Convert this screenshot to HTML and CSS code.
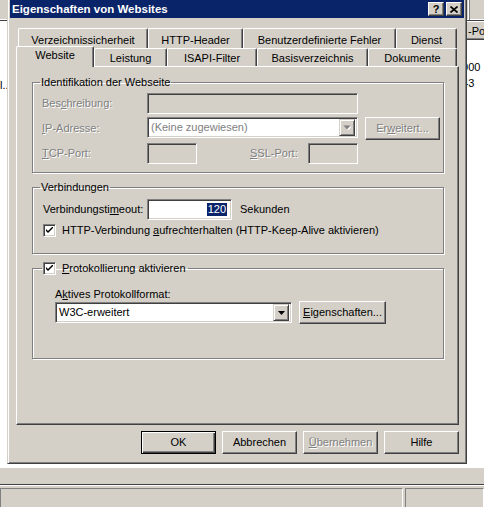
FILE: index.html
```
<!DOCTYPE html>
<html>
<head>
<meta charset="utf-8">
<link rel="stylesheet" href="styles.css">
</head>
<body>
<div class="app">
  <div class="toolbar"><span class="tsep"></span></div>
  <div class="content">
    <div class="leftpane"><span class="clip">l..</span></div>
    <div class="listpane">
      <div class="lhead"><span>-Po</span></div>
      <div class="lrows"><div class="lrow">8000</div><div class="lrow">443</div></div>
    </div>
  </div>
  <div class="hbar"></div>
  <div class="status"><div class="spanel smain"></div><div class="spanel sside"></div></div>
</div>

<div class="dialog">
  <div class="titlebar">
    <span class="ttext">Eigenschaften von Websites</span>
    <span class="tbtns">
      <span class="tbtn qm">?</span>
      <span class="tbtn"><svg width="8" height="7" viewBox="0 0 8 7"><path d="M0.5 0.5 L7.5 6.5 M7.5 0.5 L0.5 6.5" stroke="#000" stroke-width="1.6" fill="none"/></svg></span>
    </span>
  </div>
  <div class="dlgbody">
    <div class="tabs">
      <div class="tabrow back">
        <div class="tab t1">Verzeichnissicherheit</div>
        <div class="tab t2">HTTP-Header</div>
        <div class="tab t3">Benutzerdefinierte Fehler</div>
        <div class="tab t4">Dienst</div>
      </div>
      <div class="tabrow front">
        <div class="tab sel t5">Website</div>
        <div class="tab t6">Leistung</div>
        <div class="tab t7">ISAPI-Filter</div>
        <div class="tab t8">Basisverzeichnis</div>
        <div class="tab t9">Dokumente</div>
      </div>
    </div>
    <div class="panel">
      <fieldset class="grp g1">
        <legend class="lg">Identifikation der Webseite</legend>
        <div class="g1grid">
          <span class="lbl dis">Bes<u>c</u>hreibung:</span>
          <div class="edit disbg"></div>
          <span></span>
          <span class="lbl dis"><u>I</u>P-Adresse:</span>
          <div class="combo disbg"><span class="ctext dis">(Keine zugewiesen)</span><span class="cbtn"><svg width="8" height="5" viewBox="0 0 8 5"><polygon points="0.5,0.5 7.5,0.5 4,4.5" fill="#fff" transform="translate(1,1)"/><polygon points="0.5,0.5 7.5,0.5 4,4.5" fill="#808080"/></svg></span></div>
          <div class="btn dis erw">Er<u>w</u>eitert...</div>
          <span class="lbl dis"><u>T</u>CP-Port:</span>
          <div class="portrow">
            <div class="edit disbg port"></div>
            <span class="lbl dis ssl"><u>S</u>SL-Port:</span>
            <div class="edit disbg port"></div>
          </div>
        </div>
      </fieldset>

      <fieldset class="grp g2">
        <legend class="lg">Verbindungen</legend>
        <div class="torow">
          <span class="lbl tlbl">Verbindungsti<u>m</u>eout:</span>
          <div class="edit tedit"><span class="seltext">120</span></div>
          <span class="lbl sek">Sekunden</span>
        </div>
        <div class="chkrow">
          <span class="chk"><svg width="7" height="7" viewBox="0 0 7 7"><path d="M0 2 L0 4 L2 6 L7 1 L7 -1 L2 4 Z" fill="#000"/></svg></span>
          <span class="lbl">HTTP-Verbindung <u>a</u>ufrechterhalten (HTTP-Keep-Alive aktivieren)</span>
        </div>
      </fieldset>

      <fieldset class="grp g3">
        <legend class="lg lgchk">
          <span class="chk"><svg width="7" height="7" viewBox="0 0 7 7"><path d="M0 2 L0 4 L2 6 L7 1 L7 -1 L2 4 Z" fill="#000"/></svg></span>
          <span class="lbl"><u>P</u>rotokollierung aktivieren</span>
        </legend>
        <div class="fmtlbl">A<u>k</u>tives Protokollformat:</div>
        <div class="fmtrow">
          <div class="combo fmtcombo"><span class="ctext">W3C-erweitert</span><span class="cbtn"><svg width="7" height="4" viewBox="0 0 7 4"><polygon points="0,0 7,0 3.5,4" fill="#000"/></svg></span></div>
          <div class="btn eig"><u>E</u>igenschaften...</div>
        </div>
      </fieldset>
    </div>
    <div class="btnrow">
      <div class="btn def">OK</div>
      <div class="btn">Abbrechen</div>
      <div class="btn dis"><u>Ü</u>bernehmen</div>
      <div class="btn">Hilfe</div>
    </div>
  </div>
</div>
</body>
</html>
```
FILE: styles.css
```
* { box-sizing: border-box; }
html, body { margin: 0; padding: 0; }
body {
  width: 484px; height: 507px; overflow: hidden; position: relative;
  font-family: "Liberation Sans", Arial, sans-serif; font-size: 11px; line-height: 13px;
  color: #000; background: #fff;
}
u { text-decoration: underline; text-underline-offset: 1px; }

/* background application */
.app { display: flex; flex-direction: column; height: 507px; }
.toolbar { height: 21px; background: #d4d0c8; border-bottom: 1px solid #404040; box-shadow: inset 0 -1px #fff; display: flex; }
.tsep { width: 2px; margin-left: 468px; border-left: 1px solid #fff; border-right: 1px solid #808080; height: 20px; }
.content { flex: 1; display: grid; grid-template-columns: 468px 1fr; background: #fff; }
.leftpane { padding-top: 58px; }
.clip { display: block; white-space: nowrap; }
.listpane { display: flex; flex-direction: column; margin-left: -28px; }
.lhead { height: 19px; background: #d4d0c8; border-top: 1px solid #fff; border-bottom: 1px solid #404040; box-shadow: inset 0 -1px #808080; padding: 3px 0 0 28px; white-space: nowrap; }
.lrows { padding: 19px 0 0 16px; }
.lrow { height: 16px; line-height: 16px; white-space: nowrap; }
.hbar { height: 18px; background: #d4d0c8; border-top: 1px solid #fff; border-bottom: 1px solid #404040; }
.status { height: 22px; background: #d4d0c8; border-top: 1px solid #fff; display: flex; padding: 2px 0 0 0; }
.spanel { height: 20px; border: 1px solid; border-color: #808080 #fff #fff #808080; }
.smain { width: 403px; }
.sside { flex: 1; margin-left: 2px; }

/* dialog window */
.dialog {
  position: absolute; left: 7px; top: -3px; width: 460px; height: 467px;
  background: #d4d0c8;
  border: 1px solid; border-color: #d4d0c8 #404040 #404040 #d4d0c8;
  box-shadow: inset 1px 1px #fff, inset -1px -1px #808080;
  padding: 2px;
}
.titlebar {
  height: 18px; background: #0a246a; color: #fff;
  display: flex; align-items: center; justify-content: space-between;
  padding-left: 2px;
}
.ttext { font-weight: bold; font-size: 11.5px; }
.tbtns { display: flex; gap: 2px; margin-right: 2px; }
.tbtn {
  width: 16px; height: 14px; background: #d4d0c8; color: #000;
  border: 1px solid; border-color: #fff #404040 #404040 #fff;
  box-shadow: inset -1px -1px #808080;
  display: flex; align-items: center; justify-content: center;
}
.qm { font-weight: bold; font-size: 11px; line-height: 11px; }

.dlgbody { padding: 10px 5px 0 6px; }
.tabs { position: relative; z-index: 2; }
.tabrow { display: flex; }
.back { padding-left: 2px; height: 20px; }
.front { height: 18px; align-items: flex-start; }
.tab {
  background: #d4d0c8; white-space: nowrap;
  border-top: 1px solid #fff; border-left: 1px solid #fff; border-right: 1px solid #404040;
  box-shadow: inset -1px 0 #808080;
  border-radius: 2px 2px 0 0;
  display: flex; justify-content: center;
}
.back .tab { height: 20px; padding-top: 5px; }
.front .tab { height: 18px; padding-top: 3px; }
.front .tab.sel { height: 21px; margin-top: -2px; padding-top: 2px; }
.t1 { width: 130px; } .t2 { width: 95px; } .t3 { width: 153px; } .t4 { width: 61px; }
.t5 { width: 78px; } .t6 { width: 73px; } .t7 { width: 90px; } .t8 { width: 111px; } .t9 { width: 89px; }

.panel {
  height: 359px; width: 443px;
  border: 1px solid; border-color: #fff #404040 #404040 #fff;
  box-shadow: inset -1px -1px #808080;
  padding: 0 15px;
  position: relative; z-index: 1;
}

.grp {
  margin: 9px 0 0; padding: 4px 0 0 9px; width: 412px; min-width: 0;
  border: 1px solid #808080;
  box-shadow: inset 1px 1px #fff, 1px 1px #fff;
}
.lg { padding: 0 1px; margin-left: -2px; line-height: 13px; }
.g1 { height: 97px; }
.g2 { margin-top: 8px; height: 73px; padding-top: 5px; }
.g3 { margin-top: 8px; height: 97px; padding-top: 13px; }

.lbl { white-space: nowrap; }
.dis { color: #808080; text-shadow: 1px 1px #fff; }

.g1grid {
  display: grid; grid-template-columns: 98px 211px 75px; column-gap: 7px; row-gap: 3px;
  grid-template-rows: 21px 23px 21px; align-items: center;
}
.edit {
  height: 21px; background: #fff;
  border: 1px solid; border-color: #808080 #fff #fff #808080;
  box-shadow: inset 1px 1px #404040, inset -1px -1px #d4d0c8;
}
.disbg { background: #d4d0c8; }
.combo {
  height: 21px; background: #fff; align-self: start;
  border: 1px solid; border-color: #808080 #fff #fff #808080;
  box-shadow: inset 1px 1px #404040, inset -1px -1px #d4d0c8;
  display: flex; align-items: center; justify-content: space-between;
  padding: 2px 2px 2px 3px;
}
.ctext { white-space: nowrap; }
.cbtn {
  width: 16px; height: 17px; background: #d4d0c8;
  border: 1px solid; border-color: #d4d0c8 #404040 #404040 #d4d0c8;
  box-shadow: inset 1px 1px #fff, inset -1px -1px #808080;
  display: flex; align-items: center; justify-content: center;
}
.btn {
  height: 23px; width: 75px; background: #d4d0c8; white-space: nowrap;
  border: 1px solid; border-color: #fff #404040 #404040 #fff;
  box-shadow: inset -1px -1px #808080;
  display: flex; align-items: center; justify-content: center;
}
.btn.def {
  border-color: #000;
  box-shadow: inset 1px 1px #fff, inset -1px -1px #404040, inset -2px -2px #808080;
}
.portrow { grid-column: 2 / 4; display: flex; align-items: center; }
.port { width: 50px; }
.ssl { margin-left: 53px; width: 58px; }

.torow { display: flex; align-items: center; height: 21px; }
.tlbl { width: 105px; padding-left: 1px; }
.tedit { width: 85px; display: flex; justify-content: flex-end; align-items: center; padding-right: 4px; }
.seltext { background: #0a246a; color: #fff; padding: 0 1px; line-height: 13px; }
.sek { margin-left: 8px; }
.chkrow { display: flex; align-items: center; gap: 6px; margin-top: 4px; padding-left: 1px; height: 13px; }
.chk {
  width: 13px; height: 13px; background: #fff; flex: none;
  border: 1px solid; border-color: #808080 #fff #fff #808080;
  box-shadow: inset 1px 1px #404040, inset -1px -1px #d4d0c8;
  display: flex; align-items: center; justify-content: center;
}
.lgchk { display: flex; align-items: center; gap: 6px; margin-left: 0; padding: 0 2px 0 1px; }
.fmtlbl { padding-left: 13px; height: 13px; }
.fmtrow { display: flex; align-items: center; gap: 7px; padding-left: 13px; height: 23px; }
.fmtcombo { width: 237px; align-self: center; }
.eig { width: 87px; }

.btnrow { display: flex; justify-content: flex-end; gap: 6px; margin-top: 6px; }
```
